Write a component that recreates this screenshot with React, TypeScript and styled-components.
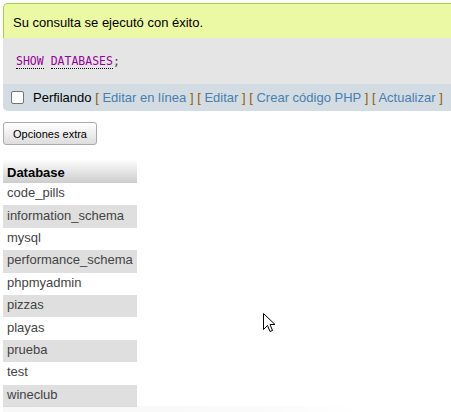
import React from "react";
import styled, { createGlobalStyle } from "styled-components";

const Global = createGlobalStyle`
  html, body { margin: 0; padding: 0; overflow: hidden; background: #fff; }
  body { font-family: "Liberation Sans", Arial, sans-serif; font-size: 13px; color: #444; }
`;

const Page = styled.div`
  position: relative;
  width: 451px;
  height: 412px;
  overflow: hidden;
  padding: 3px 0 0 3px;
  box-sizing: border-box;
`;

const Result = styled.div`
  width: 480px;
`;

const Success = styled.div`
  background: #ebf8a4;
  border: 1px solid #a2d246;
  border-bottom: none;
  border-radius: 5px 0 0 0;
  color: #000;
  padding: 2px 9px 0;
  height: 35px;
  box-sizing: border-box;
  display: flex;
  align-items: center;
`;

const SqlBox = styled.div`
  background: #e5e5e5;
  height: 46px;
  display: flex;
  align-items: center;
  padding-left: 13px;
  font-family: "DejaVu Sans Mono", "Liberation Mono", monospace;
  font-size: 11.5px;
  color: #444;
`;

const Kw = styled.span`
  color: #990099;
  border-bottom: 1px dotted #000;
  line-height: 14px;
`;

const Toolbar = styled.div`
  background: #d3dce3;
  height: 27px;
  border-radius: 0 0 0 5px;
  display: flex;
  align-items: center;
  padding-left: 8px;
  color: #000;
`;

const ToolText = styled.span`
  white-space: nowrap;
`;

const Check = styled.span`
  width: 11px;
  height: 11px;
  border: 1px solid #767676;
  border-radius: 2px;
  background: #fff;
  margin-right: 9px;
  flex: none;
`;

const Bracket = styled.span`
  color: #9a5a00;
`;

const Link = styled.span`
  color: #4a7eae;
`;

const Button = styled.div`
  margin-top: 11px;
  width: 94px;
  height: 23px;
  box-sizing: border-box;
  border: 1px solid #aaa;
  border-radius: 3px;
  background: linear-gradient(#ffffff, #dddddd);
  display: flex;
  align-items: center;
  justify-content: center;
  font-size: 11px;
  color: #000;
`;

const Table = styled.table`
  margin-top: 14px;
  border-collapse: collapse;
`;

const Th = styled.th`
  text-align: left;
  font-weight: bold;
  color: #000;
  padding: 2px 4px 0;
  height: 24px;
  box-sizing: border-box;
  background: linear-gradient(#ffffff, #cccccc);
`;

const Td = styled.td<{ $odd: boolean }>`
  padding: 0 4px 3px;
  height: 22.4px;
  box-sizing: border-box;
  line-height: 15px;
  color: #444;
  background: ${(p) => (p.$odd ? "#dfdfdf" : "#ffffff")};
`;

const Shadow = styled.div`
  position: absolute;
  left: 3px;
  top: 406px;
  width: 360px;
  height: 6px;
  background: linear-gradient(to right, rgba(0,0,0,0.03), rgba(0,0,0,0.02) 70%, rgba(0,0,0,0));
`;

const Cursor = styled.svg`
  position: absolute;
  left: 263px;
  top: 313px;
`;

const dbs = [
  "code_pills",
  "information_schema",
  "mysql",
  "performance_schema",
  "phpmyadmin",
  "pizzas",
  "playas",
  "prueba",
  "test",
  "wineclub",
];

const links = ["Editar en línea", "Editar", "Crear código PHP", "Actualizar"];

export default function App() {
  return (
    <Page>
      <Global />
      <Result>
        <Success>Su consulta se ejecutó con éxito.</Success>
        <SqlBox>
          <Kw>SHOW</Kw>&nbsp;<Kw>DATABASES</Kw>;
        </SqlBox>
        <Toolbar>
          <Check />
          <ToolText>
            Perfilando
            {links.map((l) => (
              <React.Fragment key={l}>
                {" "}
                <Bracket>[</Bracket> <Link>{l}</Link> <Bracket>]</Bracket>
              </React.Fragment>
            ))}
          </ToolText>
        </Toolbar>
      </Result>
      <Button>Opciones extra</Button>
      <Table>
        <thead>
          <tr>
            <Th>Database</Th>
          </tr>
        </thead>
        <tbody>
          {dbs.map((d, i) => (
            <tr key={d}>
              <Td $odd={i % 2 === 1}>{d}</Td>
            </tr>
          ))}
        </tbody>
      </Table>
      <Shadow />
      <Cursor width="13" height="21" viewBox="0 0 13 21">
        <path
          d="M0.5 0.5 L0.5 16.5 L4.5 12.5 L7 18.5 L9.5 17.5 L7 11.5 L12 11.5 Z"
          fill="#fff"
          stroke="#000"
          strokeWidth="1"
          strokeLinejoin="miter"
        />
      </Cursor>
    </Page>
  );
}
